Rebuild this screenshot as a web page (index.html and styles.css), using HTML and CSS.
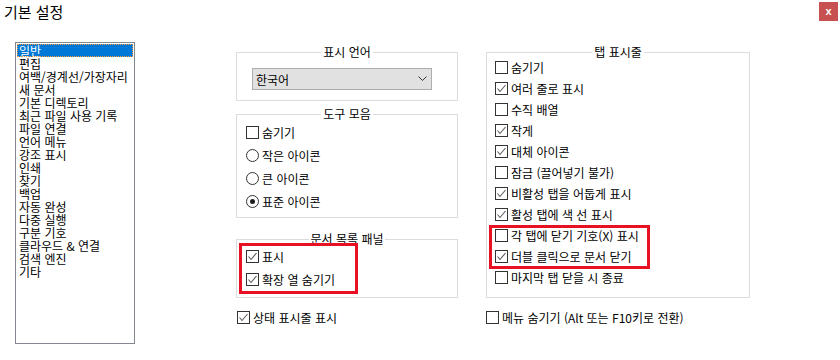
FILE: index.html
```html
<!DOCTYPE html>
<html lang="ko">
<head>
  <meta charset="UTF-8" />
  <title>기본 설정</title>
  <link rel="stylesheet" href="styles.css">
</head>
<body>
  <div class="titlebar">
    <span class="title">기본 설정</span>
    <span class="close">x</span>
  </div>

  <div class="main">
    <div class="list">
      <div class="item selected">일반</div>
      <div class="item">편집</div>
      <div class="item">여백/경계선/가장자리</div>
      <div class="item">새 문서</div>
      <div class="item">기본 디렉토리</div>
      <div class="item">최근 파일 사용 기록</div>
      <div class="item">파일 연결</div>
      <div class="item">언어 메뉴</div>
      <div class="item">강조 표시</div>
      <div class="item">인쇄</div>
      <div class="item">찾기</div>
      <div class="item">백업</div>
      <div class="item">자동 완성</div>
      <div class="item">다중 실행</div>
      <div class="item">구분 기호</div>
      <div class="item">클라우드 &amp; 연결</div>
      <div class="item">검색 엔진</div>
      <div class="item">기타</div>
    </div>

    <div class="col mid">
      <div class="group lang">
        <div class="group-title"><span>표시 언어</span></div>
        <div class="combo">
          <span>한국어</span>
          <svg width="9" height="6" viewBox="0 0 9 6"><polyline points="0.5,0.5 4.5,4.5 8.5,0.5" fill="none" stroke="#333" stroke-width="1"/></svg>
        </div>
      </div>

      <div class="group tools">
        <div class="group-title"><span>도구 모음</span></div>
        <div class="row"><span class="box"></span>숨기기</div>
        <div class="row"><span class="radio"></span>작은 아이콘</div>
        <div class="row"><span class="radio"></span>큰 아이콘</div>
        <div class="row"><span class="radio on"></span>표준 아이콘</div>
      </div>

      <div class="group doclist">
        <div class="group-title"><span>문서 목록 패널</span></div>
        <div class="row"><span class="box on"></span>표시</div>
        <div class="row"><span class="box on"></span>확장 열 숨기기</div>
        <div class="mark mark-doc"></div>
      </div>

      <div class="row outside status"><span class="box on"></span>상태 표시줄 표시</div>
    </div>

    <div class="col right">
      <div class="group tabs">
        <div class="group-title"><span>탭 표시줄</span></div>
        <div class="row"><span class="box"></span>숨기기</div>
        <div class="row"><span class="box on"></span>여러 줄로 표시</div>
        <div class="row"><span class="box"></span>수직 배열</div>
        <div class="row"><span class="box on"></span>작게</div>
        <div class="row"><span class="box on"></span>대체 아이콘</div>
        <div class="row"><span class="box"></span>잠금 (끌어넣기 불가)</div>
        <div class="row"><span class="box on"></span>비활성 탭을 어둡게 표시</div>
        <div class="row"><span class="box on"></span>활성 탭에 색 선 표시</div>
        <div class="row"><span class="box"></span>각 탭에 닫기 기호(X) 표시</div>
        <div class="row"><span class="box on"></span>더블 클릭으로 문서 닫기</div>
        <div class="row"><span class="box"></span>마지막 탭 닫을 시 종료</div>
        <div class="mark mark-tab"></div>
      </div>

      <div class="row outside menu"><span class="box"></span>메뉴 숨기기 (Alt 또는 F10키로 전환)</div>
    </div>
  </div>

  <script>
    // draw the check marks into checked boxes
    document.querySelectorAll('.box.on').forEach(function (b) {
      b.innerHTML = '<svg width="11" height="11" viewBox="0 0 11 11"><polyline points="1.5,5.5 4,8.5 9.5,2" fill="none" stroke="#5c5c5c" stroke-width="1.1"/></svg>';
    });
  </script>
</body>
</html>
```

FILE: styles.css
```css
body {
  margin: 0;
  background: #fff;
  color: #000;
  font-family: "Noto Sans CJK KR", "Noto Sans", sans-serif;
  font-size: 12px;
  width: 840px;
  height: 360px;
  overflow: hidden;
}

.titlebar {
  height: 22px;
  display: flex;
  align-items: flex-start;
  justify-content: space-between;
}

.title {
  font-size: 15px;
  line-height: 18px;
  padding: 3px 0 0 4px;
}

.close {
  width: 19px;
  height: 19px;
  margin: 2px 2px 0 0;
  background: #c75050;
  color: #fff;
  font-family: "Liberation Sans", Arial, sans-serif;
  font-weight: bold;
  font-size: 11px;
  line-height: 18px;
  text-align: center;
}

.main {
  display: flex;
  align-items: flex-start;
  padding: 20px 0 0 15px;
}

/* category list */
.list {
  width: 118px;
  height: 298px;
  border: 1px solid #828790;
  padding: 1px;
  box-sizing: content-box;
  margin: 0;
}

.list {
  width: 116px;
}

.item {
  height: 13px;
  line-height: 13px;
  padding-left: 2px;
  white-space: nowrap;
}

.item.selected {
  background: #0078d7;
  color: #fff;
  outline: 1px dotted #ff9a3c;
  outline-offset: -1px;
}

.col {
  display: flex;
  flex-direction: column;
  padding-top: 10px;
}

.mid {
  width: 222px;
  margin-left: 101px;
}

.right {
  width: 264px;
  margin-left: 28px;
}

/* group boxes */
.group {
  position: relative;
  border: 1px solid #dcdcdc;
}

.group-title {
  position: absolute;
  top: -9px;
  left: 0;
  right: 0;
  text-align: center;
  line-height: 16px;
}

.group-title span {
  background: #fff;
  padding: 0 2px;
}

.lang {
  height: 47px;
  padding: 15px 0 0 15px;
  box-sizing: border-box;
  height: 49px;
}

.tools {
  margin-top: 13px;
  padding: 6px 0 4px 9px;
}

.doclist {
  margin-top: 21px;
  padding: 5px 0 6px 9px;
}

.tabs {
  padding: 4px 0 9px 8px;
}

/* combo box */
.combo {
  width: 178px;
  height: 20px;
  background: #e1e1e1;
  border: 1px solid #adadad;
  display: flex;
  align-items: center;
  justify-content: space-between;
  padding: 0 4px 0 3px;
  box-sizing: content-box;
  width: 171px;
}

/* rows with check boxes and radios */
.row {
  display: flex;
  align-items: center;
  height: 23px;
  line-height: 16px;
  white-space: nowrap;
}

.tabs .row,
.menu {
  height: 21px;
}

.status {
  margin: 8px 0 0 1px;
}

.menu {
  margin-top: 9px;
}

.box,
.radio {
  width: 11px;
  height: 11px;
  border: 1px solid #333;
  background: #fff;
  margin-right: 3px;
  flex: none;
  display: flex;
  align-items: center;
  justify-content: center;
}

.box svg {
  display: block;
}

.radio {
  border-radius: 50%;
}

.radio.on::after {
  content: "";
  width: 5px;
  height: 5px;
  border-radius: 50%;
  background: #1e1e1e;
}

/* red highlight frames */
.mark {
  position: absolute;
  border: 3px solid #e81123;
  box-sizing: border-box;
}

.mark-doc {
  left: 2px;
  top: 3px;
  width: 119px;
  height: 51px;
}

.mark-tab {
  left: 2px;
  top: 172px;
  width: 161px;
  height: 44px;
}
```
